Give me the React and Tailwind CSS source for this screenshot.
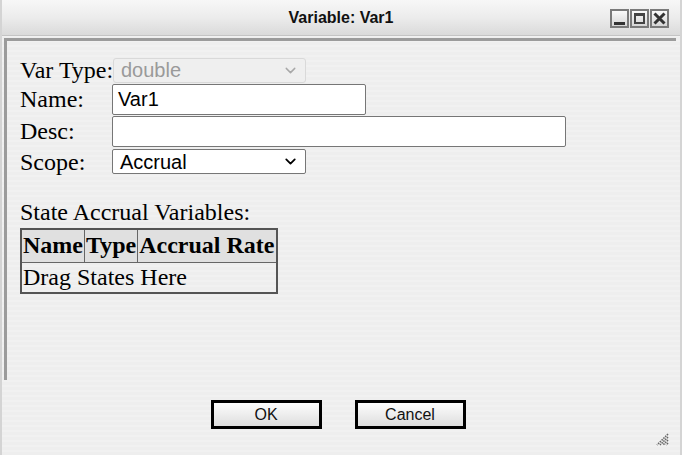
import { ChevronDown } from 'lucide-react';

const serif = { fontFamily: '"Liberation Serif", "Times New Roman", serif' };

function Field({ label, children, className = '' }) {
  return (
    <div className={`flex items-center ${className}`}>
      <span className="w-[92px] text-[24px] leading-none text-black shrink-0 whitespace-nowrap">{label}</span>
      {children}
    </div>
  );
}

function WinButton({ children }) {
  return (
    <div className="w-[19px] h-[19px] border-2 border-[#7a7a7a] bg-gradient-to-b from-[#fafafa] to-[#d6d6d6] flex items-center justify-center">
      {children}
    </div>
  );
}

export default function App() {
  return (
    <div className="w-[682px] h-[455px] bg-[#efefef] bg-[repeating-linear-gradient(0deg,#eeeeee_0px,#eeeeee_3px,#f1f1f1_3px,#f1f1f1_5px)] border-l-2 border-r-2 border-[#d4d4d4] flex flex-col overflow-hidden font-['Liberation_Sans',Arial,sans-serif]">
      {/* barra de título */}
      <div className="h-[36px] shrink-0 bg-gradient-to-b from-[#f7f7f7] via-[#ececec] to-[#dadada] border-b border-[#c4c4c4] relative flex items-center justify-center">
        <span className="text-[16px] font-bold text-[#111]">Variable: Var1</span>
        <div className="absolute right-[11px] top-[9px] flex gap-[1px]">
          <WinButton>
            <div className="w-[11px] h-[3px] bg-[#333] mt-[9px]" />
          </WinButton>
          <WinButton>
            <div className="w-[11px] h-[11px] border-2 border-t-[3px] border-[#444]" />
          </WinButton>
          <WinButton>
            <svg width="13" height="13" viewBox="0 0 13 13">
              <path d="M1.5 1.5 L11.5 11.5 M11.5 1.5 L1.5 11.5" stroke="#333" strokeWidth="3" />
            </svg>
          </WinButton>
        </div>
      </div>

      {/* panel */}
      <div className="mt-[2px] ml-[2px] mr-[4px] h-[342px] border-t-[3px] border-l-[3px] border-[#9b9b9b] pl-[13px] pt-[16px]" style={serif}>
        <div className="flex flex-col">
          <Field label="Var Type:" className="h-[26px]">
            <div className="ml-[1px] w-[193px] h-[25px] border border-[#d9d9d9] rounded-[3px] bg-[#efefef] flex items-center justify-between pl-[7px] pr-[6px] font-['Liberation_Sans',Arial,sans-serif] text-[20px] text-[#9a9a9a]">
              <span>double</span>
              <ChevronDown size={17} strokeWidth={2} className="text-[#a8a8a8]" />
            </div>
          </Field>
          <Field label="Name:" className="h-[32px]">
            <div className="w-[254px] h-[31px] border border-[#767676] rounded-[2px] bg-white flex items-center pl-[5px] font-['Liberation_Sans',Arial,sans-serif] text-[20px] text-black">
              Var1
            </div>
          </Field>
          <Field label="Desc:" className="h-[32px]">
            <div className="w-[454px] h-[31px] border border-[#767676] rounded-[2px] bg-white" />
          </Field>
          <Field label="Scope:" className="h-[27px] items-end">
            <div className="w-[194px] h-[25px] border border-[#767676] rounded-[2px] bg-white flex items-center justify-between pl-[7px] pr-[6px] font-['Liberation_Sans',Arial,sans-serif] text-[20px] text-black">
              <span>Accrual</span>
              <ChevronDown size={17} strokeWidth={2.5} className="text-black" />
            </div>
          </Field>
        </div>

        <div className="mt-[25px] text-[24px] leading-[26px] text-black">State Accrual Variables:</div>
        <table className="mt-[3px] border-collapse border-2 border-[#555] text-[24px] leading-[27px] text-black">
          <thead>
            <tr className="bg-[#e0e0e0] h-[33px]">
              <th className="border border-[#666] px-[1px] font-bold text-left">Name</th>
              <th className="border border-[#666] px-[1px] font-bold text-left">Type</th>
              <th className="border border-[#666] px-[1px] font-bold text-left">Accrual Rate</th>
            </tr>
          </thead>
          <tbody>
            <tr className="h-[31px]">
              <td colSpan={3} className="border border-[#666] px-[1px] font-normal">Drag States Here</td>
            </tr>
          </tbody>
        </table>
      </div>

      {/* botones */}
      <div className="relative flex-1 flex justify-center gap-[33px] pt-[20px] pr-[6px]">
        <button className="w-[111px] h-[29px] border-[3px] border-black bg-gradient-to-b from-[#fdfdfd] to-[#dedede] text-[16px] text-[#111] leading-none">OK</button>
        <button className="w-[111px] h-[29px] border-[3px] border-black bg-gradient-to-b from-[#fdfdfd] to-[#dedede] text-[16px] text-[#111] leading-none">Cancel</button>
        <svg className="absolute right-[11px] bottom-[9px]" width="13" height="13" viewBox="0 0 13 13">
          <path d="M12 1 L1 12 M12 4 L4 12 M12 7 L7 12 M12 10 L10 12" stroke="#666" strokeWidth="1.6" strokeDasharray="1.5 1" />
        </svg>
      </div>
    </div>
  );
}
